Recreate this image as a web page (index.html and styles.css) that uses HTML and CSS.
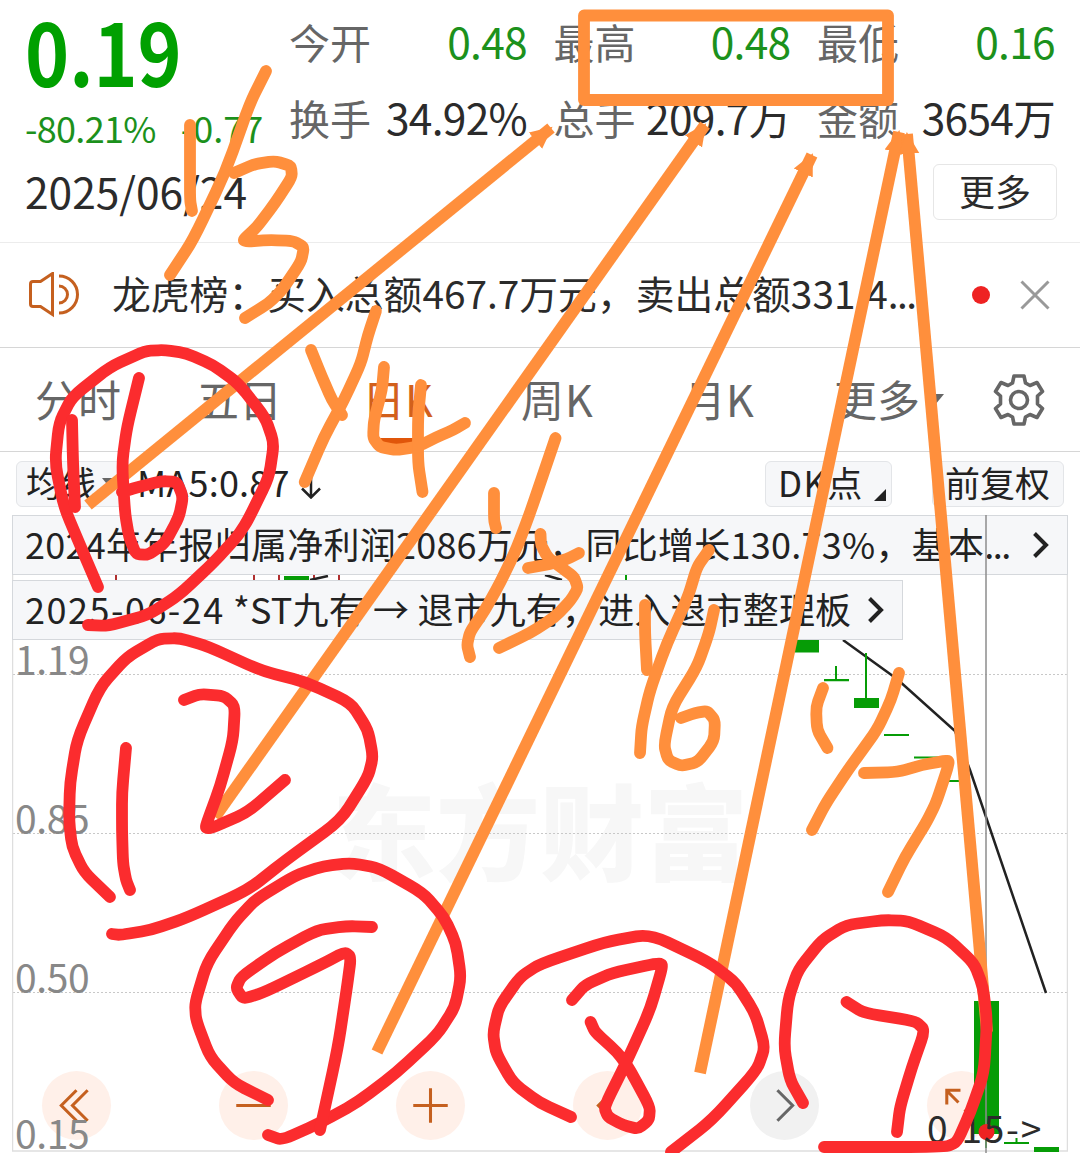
FILE: index.html
```html
<!DOCTYPE html>
<html lang="zh-CN">
<head>
    <meta charset="UTF-8">
    <meta name="viewport" content="width=device-width, initial-scale=1.0">
    <title>退市九有 日K</title>
    <link rel="stylesheet" href="styles.css">
</head>
<body>

<div class="page">
    <header class="quote">
        <div class="quote-left">
            <div class="price">0.19</div>
            <div class="change"><span>-80.21%</span><span class="diff">-0.77</span></div>
            <div class="date">2025/06/24</div>
        </div>
        <div class="quote-right">
            <div class="stats">
                <div class="stat"><label>今开</label><b class="down">0.48</b></div>
                <div class="stat"><label>最高</label><b class="down">0.48</b></div>
                <div class="stat"><label>最低</label><b class="down">0.16</b></div>
                <div class="stat"><label>换手</label><b>34.92%</b></div>
                <div class="stat"><label>总手</label><b>209.7万</b></div>
                <div class="stat"><label>金额</label><b>3654万</b></div>
            </div>
            <button class="more-btn">更多</button>
        </div>
    </header>

    <div class="notice">
        <svg class="speaker" width="52" height="46" viewBox="0 0 52 46">
            <path d="M4 9.500h7.500l12-8v41l-12-8H4q-2.500 0-2.500-2.500V12q0-2.500 2.500-2.500z"/>
            <path d="M30 14a8.500 8.500 0 0 1 0 17M30 4a18.500 18.500 0 0 1 0 37"/>
        </svg>
        <span class="notice-text">龙虎榜：买入总额467.7万元，卖出总额331.4<span class="dots">...</span></span>
        <i class="dot"></i>
        <svg class="close" width="30" height="30" viewBox="0 0 30 30"><path d="M1.500 1.500l27 27M28.500 1.500l-27 27"/></svg>
    </div>

    <nav class="tabs">
        <span class="tab">分时</span>
        <span class="tab">五日</span>
        <span class="tab active">日K</span>
        <span class="tab">周K</span>
        <span class="tab">月K</span>
        <span class="tab">更多<i class="caret"></i></span>
        <svg class="gear" width="54" height="54" viewBox="-27 -27 54 54">
            <path d="M-5-24H5L6.500-17 11-14.500 18-17.500 23.500-8.500 18.500-4V4L23.500 8.500 18 17.500 11 14.500 6.500 17 5 24H-5L-6.500 17-11 14.500-18 17.500-23.500 8.500-18.500 4V-4L-23.500-8.500-18-17.500-11-14.500-6.500-17z"/>
            <circle r="8.500"/>
        </svg>
    </nav>

    <div class="toolbar">
        <span class="chip chip-ma">均线<i class="caret"></i></span>
        <span class="ma-value">MA5:0.87</span>
        <svg class="ma-arrow" width="20" height="26" viewBox="0 0 20 26"><path d="M10 0v24M1 15.500l9 9 9-9"/></svg>
        <span class="chip chip-dk">DK点<i class="corner"></i></span>
        <span class="chip chip-fq">前复权</span>
    </div>

    <section class="chart">
        <div class="watermark">东方财富</div>
        <svg class="plot" width="1056" height="638" viewBox="12 515 1056 638">
            <g class="grid">
                <path d="M13 674.500H1067M13 833.500H1067M13 992.500H1067"/>
            </g>
            <path class="frame" d="M12.500 515V1151H1067.500V515"/>
            <g class="red-wick">
                <path d="M116 575v5M254 575v5M279 575v5M314 575v5M339 575v5"/>
            </g>
            <path class="ma-line" d="M310 580L328 576M545 575L562 580M843 640L897 679 955 731 970 770 1046 993"/>
            <g class="candle">
                <path d="M284 576h25v4h-25zM795 640h24v12.500h-24zM854 698h25v10h-25zM974 1001h25v133h-25zM1034 1147h25v5h-25z"/>
                <path d="M625 575h2v6h-2zM835 666h2v14h-2zM824 679h25v2.200h-25zM865 653h2v46h-2zM884 734h25v2h-25zM914 756.500h25v2h-25zM944 780h25v2h-25zM985 1134h2v14h-2zM1004 1142h25v2h-25zM1015.500 1138h2v5h-2z"/>
            </g>
        </svg>

        <a class="banner">
            <span class="banner-text report">2024年年报归属净利润2086万元，同比增长130.73%，基本<span class="dots">...</span></span>
            <svg width="17" height="28" viewBox="0 0 17 28"><path d="M2.500 2.500L14 14 2.500 25.500"/></svg>
        </a>
        <a class="banner short">
            <span class="banner-text"><span class="day">2025-06-24</span> *ST九有 → 退市九有，进入退市整理板</span>
            <svg width="17" height="28" viewBox="0 0 17 28"><path d="M2.500 2.500L14 14 2.500 25.500"/></svg>
        </a>

        <div class="controls">
            <span class="ctl"><svg viewBox="-34 -34 68 68"><path d="M0-15L-15 0 0 15M11-15L-4 0 11 15"/></svg></span>
            <span class="ctl"><svg viewBox="-34 -34 68 68"><path d="M-17 0H17"/></svg></span>
            <span class="ctl"><svg viewBox="-34 -34 68 68"><path d="M-17 0H17M0-17V17"/></svg></span>
            <span class="ctl"><svg viewBox="-34 -34 68 68"><path d="M6-15L-9 0 6 15"/></svg></span>
            <span class="ctl off"><svg viewBox="-34 -34 68 68"><path d="M-7-15L8 0-7 15"/></svg></span>
            <span class="ctl"><svg viewBox="-34 -34 68 68"><path d="M-1-15H-14.500V-1M-14-14L-3-3M3 4L16 17M18 4V18H4"/></svg></span>
        </div>

        <div class="axis">
            <span>1.19</span>
            <span>0.85</span>
            <span>0.50</span>
            <span>0.15</span>
        </div>

        <svg class="cursor" width="1056" height="638" viewBox="12 515 1056 638">
            <path class="candle-top" d="M974 1001h25v133h-25z"/>
            <path class="crosshair" d="M986 515V1153"/>
            <circle cx="986.500" cy="1132" r="8"/>
        </svg>
        <span class="low-label">0.15-&gt;</span>
    </section>

    <svg class="ink" id="ink" width="1080" height="1153" viewBox="0 0 1080 1153">
        <defs>
            <marker id="head" markerUnits="userSpaceOnUse" markerWidth="24" markerHeight="24" refX="20" refY="12" orient="auto">
                <path d="M0 1.500L22 12 0 22.500z"/>
            </marker>
        </defs>
        <rect class="orange" x="584" y="15.500" width="304" height="84.500"/>
        <g class="orange arrows">
            <path d="M88 505L551 128"/>
            <path d="M215 817L705 125"/>
            <path d="M377 1052L812 155"/>
            <path d="M700 1073L899 132"/>
            <path d="M987 1032L907 134"/>
        </g>
    </svg>
</div>

<script>
    // pen strokes as x,y lists
    const orange = [
        // 13
        "190,125 190,160 190,200 192,211",
        "266,71 250,103 225.5,172 193,240 170,275",
        "234,173 255,164 275,161 291,166 292,177 275,203 257,227 243,240 247,241.5 270,240 293,241 304,247 301,262 282,290 269,303 245,318",
        // 14
        "311,350 322,377 332,400 342,415",
        "376,311 368,335 361,363 344,400 324,437 304.7,482",
        "384,367 382,390 374,420 373,438 380,447 396,450 417,447 437,437 453,430 465,423",
        "421,385 418,417 418,463 422.5,492",
        // 15
        "494,493 494,520 496,528",
        "555.5,438 547,463 530,513 516,550 500,583 485,610 470,632 467,645 470,657",
        "540.5,534 541,545 548,558 562,568 574,577 578,588 571,600 555,617 530,633 499,648",
        "528,568 550,564 567,559 579,553",
        // 16
        "645,605 645,633 647,670",
        "709,550 697,567 688,597 667,643 650,690 641.6,727 640,753",
        "714,610 709,633 697,667 672,707 664,745 668,760 681,766 698,762 714,741 715,720 707,711 695,713 681,718",
        // 17
        "823,688 816,707 817,730 827.5,748",
        "899,673 891,700 877,730 850,767 826,803 812,830",
        "864,773 898,772 922,765 944,761 949,761 947,770 936,803 926,823 905,857 888,892"
    ];
    const red = [
        // 10
        "98,587 83,552 64,507 55,463 59,423 72,397 110,367 145,351 164,350 186,353 213,365 238,383 265,417 274,443 269,477 248,520 237,537 213,563 179,595 148,615 107,626 88,625",
        "72,420 73,463 75,507",
        "139,378 127,427 122,463 125,513 129,537 136,554 148,555 165,543 179,517 183,497 177,482 162,481 138,487 122,492",
        // 12
        "110,897 84,872 72,847 69,820 70,783 77,740 100,687 127,657 158,639 179,638 207,646 262,671 306,682 351,703 368,730 373,757 368,777 341,820 286,860 248,890 186,918 151,930 120,935 112,934",
        "126,748 122,793 122,830 123,863 126,880 130,890",
        "184,700 200,694 224,696 235,706 233,740 220,787 206,825 206,828 212,828 248,812 285,780",
        // 9
        "268,1100 234,1083 210,1057 196,1020 195,1003 207,963 234,923 255,900 296,875 324,866 351,863 379,868 423,893 444,917 456,943 461,977 455,1007 437,1035 396,1073 358,1102 320,1123 282,1140 268,1135",
        "372,927 348,926 317,930 275,953 241,977 236,988 243,999 265,992 324,963 345,952 351,957 347,987 338,1047 320,1130",
        // 8
        "571,1117 540,1103 513,1083 496,1053 493,1033 499,1007 520,977 540,964 605,942 650,934 709,962 736,983 755,1013 765,1047 757,1070 712,1120 671,1152",
        "572,1000 585,985 612,973 658,963 663,965 650,1010 626,1063 604,1107 608,1117 623,1125 638,1129 649,1120 650,1107 629,1068 617,1052 595,1032 590.6,1022",
        // 7
        "803,1103 790,1080 784,1047 788,1000 798,970 822,940 846,925 884,920 908,921 946,937 974,963 983,987 987,1020 984,1073 970,1113 957,1142 946,1147 824,1147",
        "846.5,1002 864,1013 915,1021 925,1030 912,1067 900,1107 897,1132"
    ];

    const ink = document.getElementById("ink");

    function drawStroke(str, cls) {
        const p = str.split(" ").map(s => s.split(",").map(Number));
        let d = "M" + p[0];
        for (let i = 1; i < p.length - 1; i++) {
            // pass close to each point, rounding only the corner itself
            const a = p[i - 1], b = p[i], c = p[i + 1];
            const k = 0.3;
            d += " L" + (b[0] + (a[0] - b[0]) * k) + "," + (b[1] + (a[1] - b[1]) * k);
            d += " Q" + b + " " + (b[0] + (c[0] - b[0]) * k) + "," + (b[1] + (c[1] - b[1]) * k);
        }
        d += " L" + p[p.length - 1];
        const path = document.createElementNS("http://www.w3.org/2000/svg", "path");
        path.setAttribute("d", d);
        path.setAttribute("class", "pen " + cls);
        ink.appendChild(path);
    }

    orange.forEach(s => drawStroke(s, "orange"));
    red.forEach(s => drawStroke(s, "red"));
</script>

</body>
</html>
```
FILE: styles.css
```css
* {
    box-sizing: border-box;
}
body {
    margin: 0;
    background: #fff;
    font-family: "Noto Sans CJK SC", sans-serif;
    color: #2b2b2b;
}
.page {
    position: relative;
    width: 1080px;
    height: 1153px;
    overflow: hidden;
    white-space: nowrap;
}
svg {
    display: block;
    fill: none;
    flex: none;
}
i {
    display: block;
    flex: none;
}
.dots {
    letter-spacing: -1.5px;
}

/* quote header */
.quote {
    display: flex;
    height: 243px;
    padding: 0 25px;
    border-bottom: 1px solid #ececec;
}
.quote-left {
    width: 264px;
    padding-top: 5px;
}
.price {
    height: 92px;
    line-height: 90px;
    font-size: 86px;
    font-weight: 700;
    color: #00a000;
    transform: scaleX(0.87);
    transform-origin: 0 50%;
}
.change {
    display: flex;
    gap: 25px;
    height: 61px;
    line-height: 60px;
    font-size: 36px;
    letter-spacing: -0.7px;
    color: #1c911c;
}
.diff {
    letter-spacing: 0;
}
.date {
    height: 64px;
    line-height: 66px;
    font-size: 42.5px;
}
.quote-right {
    flex: 1;
    display: flex;
    flex-direction: column;
}
.stats {
    display: grid;
    grid-template-columns: 238px 237px 238px;
    column-gap: 26.500px;
    grid-auto-rows: 75.5px;
    padding-top: 3px;
}
.stat {
    display: flex;
    justify-content: space-between;
    line-height: 76px;
}
.stat label {
    font-size: 41px;
    color: #666;
}
.stat b {
    font-weight: 400;
    font-size: 42.5px;
    letter-spacing: -0.7px;
}
.stat .down {
    color: #1c911c;
}
.more-btn {
    align-self: flex-end;
    width: 124px;
    height: 56px;
    margin: 10px -2px 0 0;
    padding: 0 0 4px;
    border: 1.5px solid #e6e6e6;
    border-radius: 6px;
    background: #fff;
    font: 36px/48px "Noto Sans CJK SC", sans-serif;
    color: #2b2b2b;
}

/* notice */
.notice {
    display: flex;
    align-items: center;
    height: 105px;
    padding: 0 30px 0 29px;
    border-bottom: 1px solid #d6d6d6;
}
.speaker {
    stroke: #c5601f;
    stroke-width: 3;
}
.notice-text {
    width: 860px;
    margin: -6px 0 0 31px;
    font-size: 38.8px;
}
.dot {
    width: 18px;
    height: 18px;
    border-radius: 50%;
    background: #ee2222;
}
.close {
    margin-left: 30px;
    stroke: #999;
    stroke-width: 3;
}

/* tabs */
.tabs {
    display: flex;
    align-items: center;
    height: 104px;
    padding-left: 35px;
    border-bottom: 1px solid #d6d6d6;
}
.tab {
    position: relative;
    display: flex;
    align-items: center;
    width: 161px;
    line-height: 98px;
    padding-bottom: 4px;
    font-size: 43px;
    color: #666;
}
.tab:nth-child(3) {
    padding-left: 5px;
}
.tab:nth-child(4) {
    padding-left: 3px;
    letter-spacing: 1px;
}
.tab:nth-child(5) {
    padding-left: 4px;
}
.tab:nth-child(6) {
    width: 152px;
    margin-left: -6px;
}
.tab.active {
    color: #d2601c;
}
.tab.active::after {
    content: "";
    position: absolute;
    left: 23px;
    bottom: 7px;
    width: 36px;
    height: 6px;
    background: #e0560a;
}
.caret {
    border: 9px solid transparent;
    border-top: 11px solid #666;
    border-bottom: 0;
    margin: 3px 0 0 6px;
}
.gear {
    margin-left: 6px;
    stroke: #666;
    stroke-width: 3.6;
    stroke-linejoin: round;
}

/* toolbar */
.toolbar {
    display: flex;
    align-items: center;
    height: 63px;
    padding: 0 16px;
    font-size: 35px;
    color: #222;
}
.chip {
    position: relative;
    display: flex;
    align-items: center;
    height: 46px;
    line-height: 40px;
    padding-bottom: 4px;
    border: 1px solid #e3e5e8;
    border-radius: 6px;
    background: #f6f7f9;
}
.chip-ma {
    width: 112px;
    padding-left: 9px;
}
.ma-value {
    margin: -5px 0 0 9px;
    font-size: 36px;
    letter-spacing: 0.2px;
}
.ma-arrow {
    margin: 4px 0 0 11px;
    stroke: #222;
    stroke-width: 2.5;
}
.chip-dk {
    width: 127px;
    margin-left: auto;
    padding-left: 12px;
    letter-spacing: 1.3px;
}
.corner {
    position: absolute;
    right: 5px;
    bottom: 5px;
    border-left: 12px solid transparent;
    border-bottom: 12px solid #222;
}
.chip-fq {
    width: 132px;
    margin-left: 40px;
    padding-left: 12px;
}

/* chart */
.chart {
    position: relative;
    height: 638px;
    margin: 0 12px;
}
.watermark {
    position: absolute;
    left: 320px;
    top: 238px;
    line-height: 150px;
    font-size: 104px;
    font-weight: 900;
    color: #f7f7f7;
}
.plot,
.cursor {
    position: absolute;
    left: 0;
    top: 0;
}
.grid {
    stroke: #c8c8c8;
    stroke-dasharray: 2 2;
}
.frame {
    stroke: #dedede;
    stroke-width: 1.5;
}
.red-wick {
    stroke: #b03030;
    stroke-width: 2;
}
.ma-line {
    stroke: #222;
    stroke-width: 2.5;
}
.candle,
.candle-top {
    fill: #069c06;
}
.crosshair {
    stroke: #8d8d8d;
    stroke-width: 1.5;
}
.cursor circle {
    fill: #ee2222;
}
.banner {
    position: relative;
    display: flex;
    align-items: center;
    justify-content: space-between;
    height: 60px;
    padding: 0 18px 0 12px;
    border: 1.5px solid #d5d8dc;
    background: #f6f7f9;
    color: #222;
    font-size: 36px;
}
.banner.short {
    width: 891px;
    margin-top: 5px;
}
.banner-text {
    line-height: 50px;
    padding-bottom: 5px;
    letter-spacing: 0.15px;
}
.banner-text.report {
    letter-spacing: 0.25px;
}
.day {
    letter-spacing: 1.5px;
}
.banner svg {
    stroke: #222;
    stroke-width: 4;
}
.controls {
    position: absolute;
    left: 30px;
    top: 556px;
    display: flex;
    gap: 108px;
}
.ctl {
    width: 69px;
    height: 69px;
    border-radius: 50%;
    background: #fff0e9;
}
.ctl svg {
    stroke: #c5601f;
    stroke-width: 3;
}
.ctl.off {
    background: #f1f1f1;
}
.ctl.off svg {
    stroke: #666;
}
.axis {
    position: absolute;
    left: 3px;
    top: 117px;
    line-height: 52px;
    font-size: 39px;
    letter-spacing: -0.4px;
    color: #888;
}
.axis span {
    display: block;
    height: 159px;
}
.axis span:nth-child(3) {
    height: 156px;
}
.axis span:last-child {
    height: 52px;
}
.low-label {
    position: absolute;
    left: 915px;
    top: 586px;
    line-height: 52px;
    font-size: 37px;
    letter-spacing: 1.8px;
}

/* hand-drawn notes */
.ink {
    position: absolute;
    left: 0;
    top: 0;
    stroke-width: 11.8;
    stroke-linejoin: round;
}
.orange {
    stroke: #ff8f3c;
}
.red {
    stroke: #fb2c2e;
}
.pen {
    stroke-linecap: round;
}
.arrows path {
    marker-end: url(#head);
}
#head path {
    fill: #ff8f3c;
    stroke: none;
}
```
